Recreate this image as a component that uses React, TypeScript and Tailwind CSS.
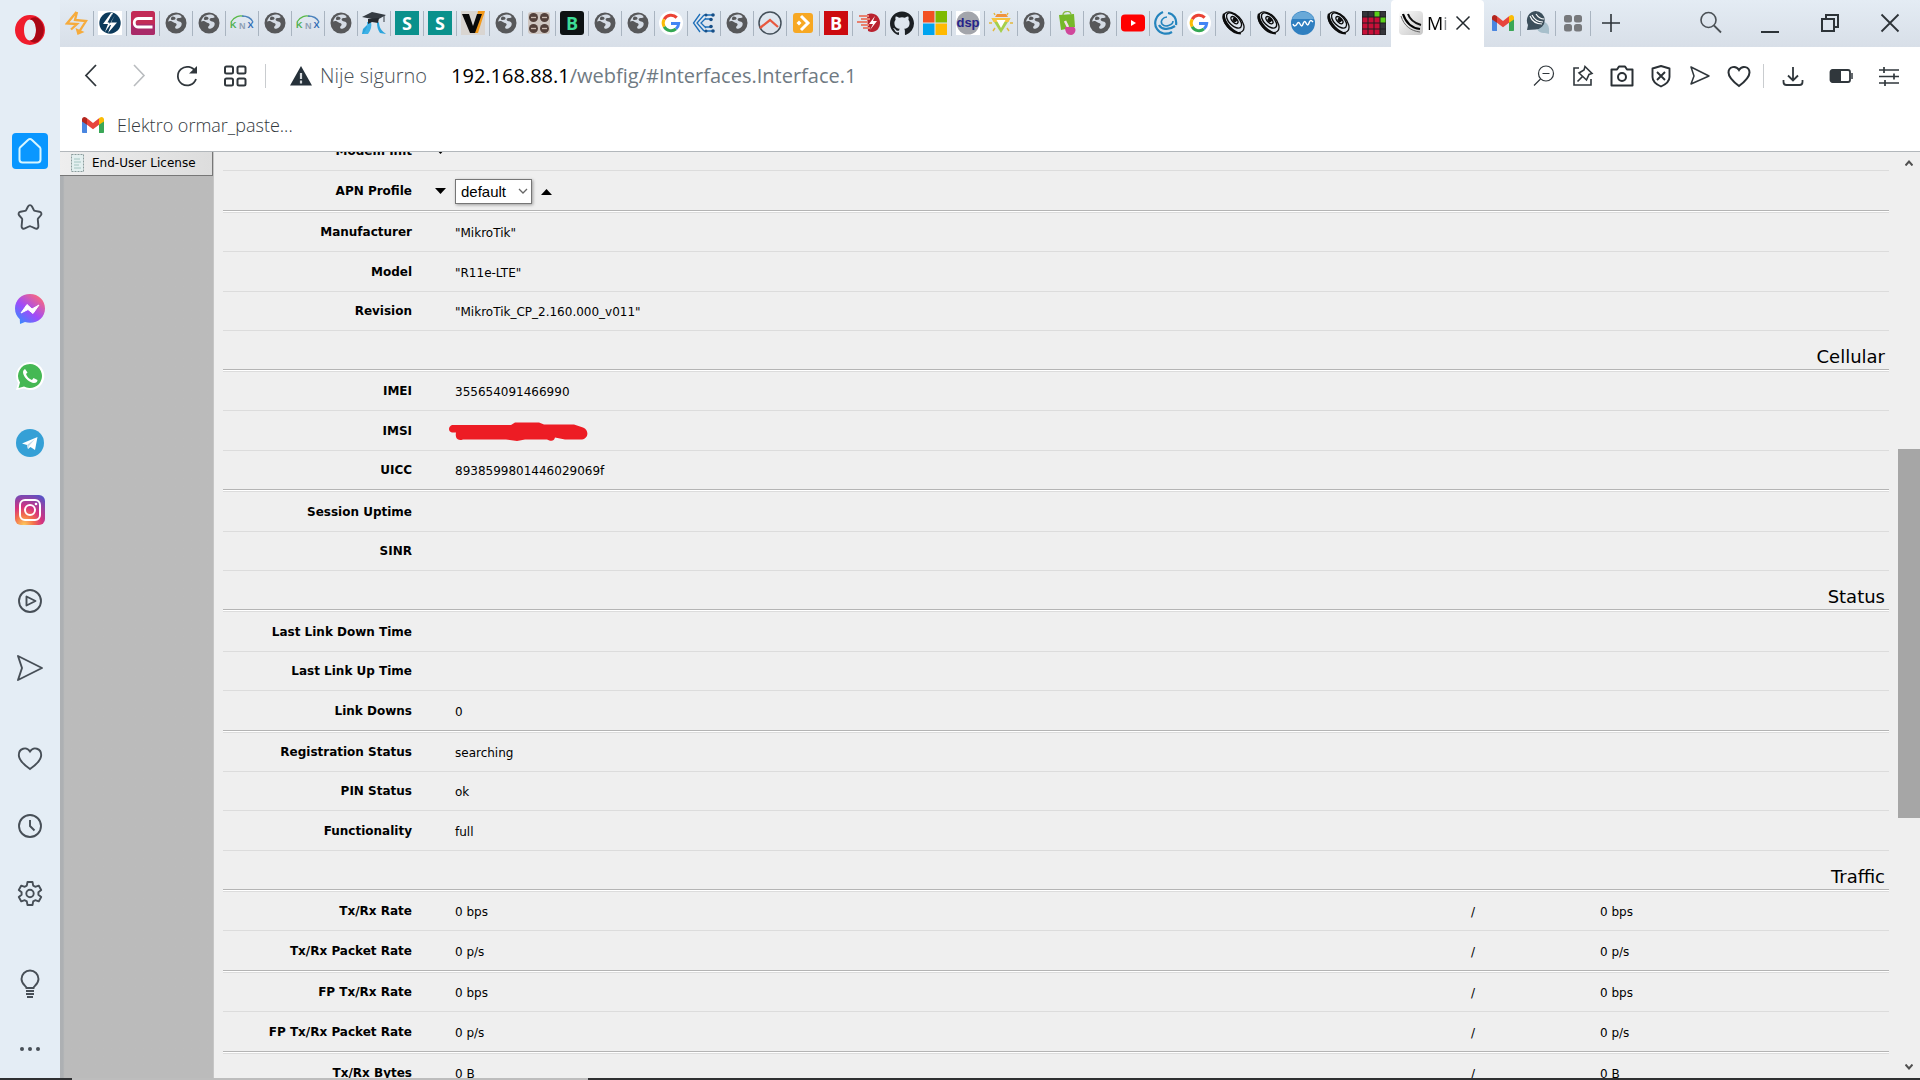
import type { ReactNode } from 'react'

type IconProps = { children: ReactNode; size?: string; box?: string }

function Icon({ children, size = 'size-6', box = '0 0 24 24' }: IconProps) {
  return (
    <svg className={`${size} shrink-0`} viewBox={box} fill="none" aria-hidden="true">
      {children}
    </svg>
  )
}

/* ---------- favicons ---------- */

const Globe = () => (
  <Icon>
    <circle cx="12" cy="12" r="10.500" fill="#57585a" />
    <path d="M4 10.500c1.800-1 3.800-.6 5 .6 1.300 1.300 3.300.7 3.600 2.200.2 1.500-1.600 1.900-1.500 3.200.1 1 1.200 1.500 2.300 1.200 2.600-.7 4.600-2.700 4.300-5.200-.2-1.900-2.300-2-4-2.600-1.500-.5-1.400-2-.2-2.600 1.300-.7 3 .2 4.200-1l-.8-1.600C14 2.500 9 3.500 6.500 6 5 7.500 4.500 9 4 10.500z" fill="#d5dce5" />
    <path d="M8.500 5.500c2 .1 3.500 1 3 2.300-.5 1.200-2.600 1.400-4.300.9C6.500 7.300 7.300 6 8.500 5.500z" fill="#57585a" />
  </Icon>
)

const Google = () => (
  <Icon>
    <circle cx="12" cy="12" r="12" fill="#fff" />
    <g strokeWidth="3">
      <path d="M17.700 6.600A7.800 7.800 0 005.200 8.200" stroke="#ea4335" />
      <path d="M5.200 8.200a7.800 7.800 0 000 7.600" stroke="#fbbc05" />
      <path d="M5.200 15.800a7.800 7.800 0 0011.800 2.100" stroke="#34a853" />
      <path d="M17 17.900a7.800 7.800 0 002.700-5.400H12" stroke="#4285f4" />
    </g>
  </Icon>
)

const Gmail = ({ size = 'size-6' }: { size?: string }) => (
  <Icon size={size}>
    <path d="M1 6v13c0 .8.500 1 1 1h4v-9z" fill="#4a86e0" />
    <path d="M23 6v13c0 .8-.5 1-1 1h-4v-9z" fill="#3aa757" />
    <path d="M1 6.500C1 4 3.500 3.200 5 4.500l1 .8v6.500L1 8.500z" fill="#b3261e" />
    <path d="M23 6.500C23 4 20.500 3.200 19 4.500l-1 .8v6.500l5-3.300z" fill="#fbbc04" />
    <path d="M6 5.300l6 4.600 6-4.600v6.400l-6 4.600-6-4.600z" fill="#e8453c" />
  </Icon>
)

const Knx = () => (
  <Icon>
    <path d="M1 11C4 5.500 10 4 14 5.500" stroke="#58b947" strokeWidth="1.300" />
    <path d="M12 5c5 0 9 2 11 6" stroke="#4c83bd" strokeWidth="1.300" />
    <g fontSize="9" fontWeight="700" fontFamily="Liberation Sans, sans-serif">
      <text x="0" y="17" fill="#4faf4e">K</text>
      <text x="9" y="18" fill="#8fa0b4">N</text>
      <text x="17.500" y="17" fill="#2f6cb5">X</text>
    </g>
  </Icon>
)

const Letter = ({ ch, bg, fg, r = 0 }: { ch: string; bg: string; fg: string; r?: number }) => (
  <Icon>
    <rect width="24" height="24" rx={r} fill={bg} />
    <text x="12" y="18.500" textAnchor="middle" fontSize="18" fontWeight="700" fontFamily="Open Sans, sans-serif" fill={fg}>
      {ch}
    </text>
  </Icon>
)

const Dish = () => (
  <Icon>
    <g transform="rotate(45 12 12)" stroke="#0b0b0b" fill="none">
      <ellipse cx="11" cy="9.500" rx="9.500" ry="5" strokeWidth="1.400" />
      <ellipse cx="12" cy="11" rx="12.500" ry="7.500" strokeWidth="1.300" />
      <path d="M-1 12c3 7 19 9 26 2-6 4-19 5-26-2z" fill="#0b0b0b" strokeWidth="1.800" />
      <ellipse cx="11" cy="9" rx="4.500" ry="2.200" strokeWidth="1.400" />
      <circle cx="11" cy="8.500" r="1.800" fill="#0b0b0b" />
    </g>
  </Icon>
)

const Bolt = () => (
  <Icon>
    <path d="M11.500 1L2 12.500l10 .5L6 18.500" stroke="#f6ab3c" strokeWidth="2.300" />
    <path d="M12 1L10 9l11 1-7 11" stroke="#f6ab3c" strokeWidth="2.300" />
    <path d="M10.500 17l2 7 7-3z" fill="#f6ab3c" />
  </Icon>
)

const BoltDisc = () => (
  <Icon>
    <rect width="24" height="24" fill="#fff" />
    <circle cx="12" cy="12" r="10.700" fill="#0c3a5b" />
    <path d="M13 2L5 13h5L7 21l5-7-1-4 4-8z" fill="#fff" />
    <path d="M17 4l-4 7.500h6L10 22l3-8h-2z" fill="#fff" />
    <path d="M14 3L9.500 11.500h3z" fill="#0c3a5b" />
  </Icon>
)

const MagentaC = () => (
  <Icon>
    <rect width="24" height="24" rx="2.500" fill="#c22b56" />
    <rect y="13" width="24" height="11" rx="2.500" fill="#a92a68" />
    <path d="M21.500 7.500H7c-5 0-5 8.500 0 8.500h14.500" stroke="#fff" strokeWidth="2.800" />
  </Icon>
)

const Graduate = () => (
  <Icon>
    <path d="M6 11L4 23H0l1-5 4-4zM17 11c0 6 3 9 7 12l-6-1c-2-3-3-6-3-10z" fill="#2ba4dc" />
    <path d="M5 11c1 5-1 8-4 12h5c3-4 4-8 3-12z" fill="#3db1e6" />
    <path d="M0 6l10-5 14 3-9 5z" fill="#353b42" />
    <path d="M6 8v5l4-2 6 1 1-5z" fill="#252a30" />
    <path d="M22 4v7" stroke="#353b42" strokeWidth="1" />
  </Icon>
)

const Vee = () => (
  <Icon>
    <rect width="24" height="24" fill="#d9d5d1" />
    <path d="M17 0h7l-7 22h-4z" fill="#f39a1b" />
    <path d="M1 3h7l4 12 4-12h5l-7 19H9z" fill="#0a0a0a" />
  </Icon>
)

const Knobs = () => (
  <Icon>
    <rect x="1" y="1" width="22" height="22" rx="3" fill="#cfc7c2" />
    {[6.5, 17.5].map((y) =>
      [6.5, 17.5].map((x) => (
        <g key={`${x}-${y}`}>
          <circle cx={x} cy={y} r="4.500" fill="#53403a" />
          <path d={`M${x - 2.5} ${y}h5`} stroke="#c9b8ae" strokeWidth="1.300" />
        </g>
      )),
    )}
  </Icon>
)

const Circuit = () => (
  <Icon>
    <path d="M8 3L1.500 12 8 21M12 4L5 12l7 8M14 7l-5 5 5 5" stroke="#1d6fb8" strokeWidth="1.300" />
    <path d="M12 4h9M13 8h6M12 20h9M13 16h6" stroke="#1d6fb8" strokeWidth="1.600" />
    <g fill="#174f87">
      <circle cx="21" cy="4" r="1.800" />
      <circle cx="19" cy="8.500" r="1.800" />
      <circle cx="19" cy="15.500" r="1.800" />
      <circle cx="21" cy="20" r="1.800" />
      <circle cx="14" cy="4" r="1.500" />
      <circle cx="14" cy="20" r="1.500" />
    </g>
  </Icon>
)

const Summit = () => (
  <Icon>
    <circle cx="12" cy="12" r="11" stroke="#44505a" strokeWidth="1.500" />
    <path d="M2 17l10-8 8 7" stroke="#e8583e" strokeWidth="2.300" />
  </Icon>
)

const OrangeArrow = () => (
  <Icon>
    <rect x="2" y="2" width="20" height="20" rx="3" fill="#f7a823" />
    <path d="M10 5l7 7-7 7" stroke="#fff" strokeWidth="3" />
    <path d="M5.500 12L8 9.500l2.500 2.500L8 14.500z" fill="#fff" />
  </Icon>
)

const HeadBolt = () => (
  <Icon>
    <path d="M10 3.500c7-3 13 2 13 8.500s-6 11-12 8z" fill="#b9222f" />
    <path d="M2 5h10M4 8h9M0 11h11M4 14h8M6 17h7" stroke="#e8816f" strokeWidth="1.800" />
    <path d="M18 5l-6 8h4l-3 6 7-9h-4z" fill="#fff" />
  </Icon>
)

const Github = () => (
  <Icon>
    <path fill="#1b1f23" d="M12 .5C5.400.5 0 5.900 0 12.500c0 5.300 3.400 9.800 8.200 11.400.6.100.8-.3.800-.6v-2c-3.300.7-4-1.600-4-1.600-.6-1.400-1.300-1.800-1.300-1.800-1.100-.7.100-.7.100-.7 1.200.1 1.800 1.200 1.800 1.200 1.100 1.800 2.800 1.300 3.500 1 .1-.8.400-1.300.8-1.600-2.700-.3-5.500-1.300-5.500-5.900 0-1.300.5-2.400 1.200-3.200-.1-.3-.5-1.500.1-3.200 0 0 1-.3 3.300 1.200a11.500 11.500 0 016 0c2.300-1.500 3.300-1.200 3.300-1.200.7 1.700.2 2.900.1 3.200.8.800 1.200 1.900 1.200 3.200 0 4.600-2.800 5.600-5.500 5.900.4.400.8 1.100.8 2.200v3.300c0 .3.200.7.800.6A12 12 0 0024 12.500C24 5.900 18.600.5 12 .5z" />
  </Icon>
)

const Microsoft = () => (
  <Icon>
    <rect x="0" y="0" width="11.500" height="11.500" fill="#f25022" />
    <rect x="12.500" y="0" width="11.500" height="11.500" fill="#7fba00" />
    <rect x="0" y="12.500" width="11.500" height="11.500" fill="#00a4ef" />
    <rect x="12.500" y="12.500" width="11.500" height="11.500" fill="#ffb900" />
  </Icon>
)

const Dsp = () => (
  <Icon>
    <rect width="24" height="24" fill="#fff" />
    <circle cx="12" cy="12" r="11.500" fill="#a3a5ab" />
    <text x="12" y="16" textAnchor="middle" fontSize="13" fontWeight="700" fontFamily="Liberation Sans, sans-serif" fill="#26238a">
      dsp
    </text>
  </Icon>
)

const Sun = () => (
  <Icon>
    <path d="M6 6l2-3h9l2 3z" fill="#f0933c" />
    <path d="M2.500 7h19L12 22z" fill="#a5cf4c" />
    <path d="M2.500 7h19l-2 4h-15z" fill="#f5c542" />
    <path d="M7.500 9h9L12 17z" fill="#fff" />
    <path d="M12 0v2M5 2l1 2M19 2l-1 2M0 12h3M24 12h-3M4 20l2-3M20 20l-2-3" stroke="#e3b83d" strokeWidth="1.400" />
  </Icon>
)

const Bag = () => (
  <Icon>
    <path d="M8 4c0-4 7-5 8-1" stroke="#8dbb4a" strokeWidth="1.300" />
    <path d="M4 4l15-1 1 13-14 3z" fill="#76b82a" />
    <path d="M10 10l3 6" stroke="#f5dfe9" strokeWidth="2.500" />
    <path d="M10 16h9c3 2 1 8-3 8s-6-3-6-8z" fill="#d0479b" />
  </Icon>
)

const Youtube = () => (
  <Icon>
    <rect x="0" y="3.500" width="24" height="17" rx="4" fill="#f00" />
    <path d="M10 9v6l5-3z" fill="#fff" />
  </Icon>
)

const Swirl = () => (
  <Icon>
    <g stroke="#2484bd" strokeWidth="2.200">
      <path d="M9 1C2 4-1 12 3 18c3 5 10 6 15 3M14 2c6 1 9 6 8 12" />
      <path d="M13 6c-4 0-7 4-5 7 3 4 11 1 11-3" strokeWidth="1.600" />
      <path d="M5 14c2 4 9 6 16 1" />
    </g>
  </Icon>
)

const Wave = () => (
  <Icon>
    <circle cx="12" cy="12" r="12" fill="#2f7fc0" />
    <path d="M1 8a12 12 0 0122 0z" fill="#69a9d8" />
    <path d="M2 13c1 3 3 2 4 0s2-2 3 0 2 3 3 0 2-3 3-1 2 3 3 0 2-3 4-1" stroke="#fff" strokeWidth="1.500" />
  </Icon>
)

const PixelGrid = () => (
  <Icon>
    <rect width="24" height="24" fill="#1c1c20" />
    {[0, 1, 2, 3].map((r) =>
      [0, 1, 2, 3].map((c) => {
        const green = (r === 0 && c === 2) || (r === 1 && c === 3)
        const dark = r === 0 || c === 3
        return <rect key={`${r}${c}`} x={c * 6 + 0.5} y={r * 6 + 0.5} width="5" height="5" fill={green ? '#5ad01a' : dark ? '#35353a' : '#c80f38'} />
      }),
    )}
  </Icon>
)

const Mikrotik = () => (
  <Icon>
    <defs>
      <linearGradient id="mt" x1="0" y1="0" x2="1" y2="1">
        <stop offset="0" stopColor="#fdfdfd" />
        <stop offset="1" stopColor="#c6c6c6" />
      </linearGradient>
    </defs>
    <rect width="24" height="24" rx="4" fill="url(#mt)" />
    <path d="M2 5c3 10 10 15 19 16" stroke="#666" strokeWidth="1" />
    <path d="M4 3c3 9 8 14 17 15" stroke="#000" strokeWidth="2.200" />
    <path d="M9 3c2 6 6 9 13 11" stroke="#111" strokeWidth="2" />
  </Icon>
)

const Chat = () => (
  <Icon>
    <path d="M15 10a8 8 0 018 9v4l-4-1c-5 0-8-2-8-6z" fill="#a7bfcb" />
    <path d="M9.500 0a9 9 0 110 18.500L1 19l1-5A9.500 9.500 0 019.500 0z" fill="#3c4f5b" />
    <path d="M4 5c2 5 6 8 12 8M6 4c2 4 5 7 11 7M10 3c2 3 4 5 8 5" stroke="#fff" strokeWidth="1.200" />
  </Icon>
)

const FourDots = () => (
  <Icon>
    <g fill="#77797c">
      <rect x="3" y="4" width="8" height="7.500" rx="2.500" />
      <rect x="13" y="4" width="8" height="7.500" rx="2.500" />
      <rect x="3" y="13" width="8" height="7.500" rx="2.500" />
      <rect x="13" y="13" width="8" height="7.500" rx="2.500" />
    </g>
  </Icon>
)

const tabs: { name: string; icon: ReactNode }[] = [
  { name: 'Energy', icon: <Bolt /> },
  { name: 'Power', icon: <BoltDisc /> },
  { name: 'Catalog', icon: <MagentaC /> },
  { name: 'Site', icon: <Globe /> },
  { name: 'Site', icon: <Globe /> },
  { name: 'KNX', icon: <Knx /> },
  { name: 'Site', icon: <Globe /> },
  { name: 'KNX', icon: <Knx /> },
  { name: 'Site', icon: <Globe /> },
  { name: 'Courses', icon: <Graduate /> },
  { name: 'S', icon: <Letter ch="S" bg="#0a918c" fg="#fff" /> },
  { name: 'S', icon: <Letter ch="S" bg="#0a918c" fg="#fff" /> },
  { name: 'V', icon: <Vee /> },
  { name: 'Site', icon: <Globe /> },
  { name: 'Knobs', icon: <Knobs /> },
  { name: 'B', icon: <Letter ch="B" bg="#0d1213" fg="#3ddc97" r={3} /> },
  { name: 'Site', icon: <Globe /> },
  { name: 'Site', icon: <Globe /> },
  { name: 'Google', icon: <Google /> },
  { name: 'Circuit', icon: <Circuit /> },
  { name: 'Site', icon: <Globe /> },
  { name: 'Summit', icon: <Summit /> },
  { name: 'Arrow', icon: <OrangeArrow /> },
  { name: 'B', icon: <Letter ch="B" bg="#cc0a0f" fg="#fff" /> },
  { name: 'Electro', icon: <HeadBolt /> },
  { name: 'GitHub', icon: <Github /> },
  { name: 'Microsoft', icon: <Microsoft /> },
  { name: 'dsp', icon: <Dsp /> },
  { name: 'Solar', icon: <Sun /> },
  { name: 'Site', icon: <Globe /> },
  { name: 'Shop', icon: <Bag /> },
  { name: 'Site', icon: <Globe /> },
  { name: 'YouTube', icon: <Youtube /> },
  { name: 'Swirl', icon: <Swirl /> },
  { name: 'Google', icon: <Google /> },
]

const wideTabs = [
  { name: 'Antenna', icon: <Dish /> },
  { name: 'Antenna', icon: <Dish /> },
  { name: 'Wave', icon: <Wave /> },
  { name: 'Antenna', icon: <Dish /> },
  { name: 'Pixels', icon: <PixelGrid /> },
]

const pinnedTabs = [
  { name: 'Gmail', icon: <Gmail /> },
  { name: 'Forum', icon: <Chat /> },
  { name: 'Speed dial', icon: <FourDots /> },
]

function TabBar() {
  return (
    <header className="flex h-[47px] shrink-0 bg-linear-to-b from-[#e4ecf4] to-[#d8dfe8] pl-px">
      <div className="flex h-[46px] items-center">
        {tabs.map((t, i) => (
          <button key={i} aria-label={t.name} className="flex h-[25px] w-[33px] shrink-0 items-center justify-center border-r border-[#a9b4c0]">
            {t.icon}
          </button>
        ))}
        {wideTabs.map((t, i) => (
          <button key={i} aria-label={t.name} className={`flex h-[25px] w-[35px] shrink-0 items-center justify-center border-[#a9b4c0] ${i < 4 ? 'border-r' : ''}`}>
            {t.icon}
          </button>
        ))}
      </div>
      <div className="flex w-[93px] shrink-0 items-center rounded-t bg-white pb-px pl-2">
        <Mikrotik />
        <span className="ml-1 w-5 overflow-hidden bg-linear-to-r from-black from-70% to-gray-300 bg-clip-text text-lg leading-6 text-transparent">Mi</span>
        <button aria-label="Close tab" className="ml-2">
          <Icon size="size-4" box="0 0 16 16">
            <path d="M1.500 1.500l13 13M14.500 1.500l-13 13" stroke="#22282d" strokeWidth="1.500" />
          </Icon>
        </button>
      </div>
      <div className="flex h-[46px] flex-1 items-center pl-[2px]">
        {pinnedTabs.map((t) => (
          <button key={t.name} aria-label={t.name} className="flex h-[25px] w-[35px] shrink-0 items-center justify-center border-r border-[#a9b4c0]">
            {t.icon}
          </button>
        ))}
        <button aria-label="New tab" className="ml-2">
          <Icon>
            <path d="M12 3v18M3 12h18" stroke="#2d3338" strokeWidth="1.600" />
          </Icon>
        </button>
        <div className="ml-auto flex">
          <button aria-label="Search tabs" className="flex w-15 justify-center">
            <Icon>
              <circle cx="10.500" cy="9" r="7.500" stroke="#4a5055" strokeWidth="1.600" />
              <path d="M16 14.500l7 7" stroke="#4a5055" strokeWidth="1.800" />
            </Icon>
          </button>
          <button aria-label="Minimize" className="flex w-15 justify-center">
            <Icon>
              <path d="M3 21h18" stroke="#2d3338" strokeWidth="2" />
            </Icon>
          </button>
          <button aria-label="Restore" className="flex w-15 justify-center">
            <Icon>
              <path d="M4 8h12v12H4zM8 8V4h12v12h-4" stroke="#2d3338" strokeWidth="2" />
            </Icon>
          </button>
          <button aria-label="Close" className="flex w-15 justify-center">
            <Icon>
              <path d="M3.500 3.500l17 17M20.500 3.500l-17 17" stroke="#2d3338" strokeWidth="1.800" />
            </Icon>
          </button>
        </div>
      </div>
    </header>
  )
}

/* ---------- toolbar ---------- */

const navButtons = [
  { name: 'Back', icon: <path d="M17 1L7 11.500 17 22" stroke="#30373c" strokeWidth="1.800" /> },
  { name: 'Forward', icon: <path d="M7 1l10 10.500L7 22" stroke="#b9bcbf" strokeWidth="1.600" /> },
  {
    name: 'Reload',
    icon: (
      <>
        <path d="M20.500 8A9.300 9.300 0 1021 15" stroke="#30373c" strokeWidth="1.800" />
        <path d="M22 2v7.500h-8z" fill="#30373c" />
      </>
    ),
  },
  {
    name: 'Speed dial',
    icon: (
      <g stroke="#30373c" strokeWidth="2">
        <rect x="2" y="2.500" width="8" height="7" rx="1.500" />
        <rect x="14.500" y="2.500" width="8" height="7" rx="1.500" />
        <rect x="2" y="14.500" width="8" height="7" rx="1.500" />
        <rect x="14.500" y="14.500" width="8" height="7" rx="1.500" />
      </g>
    ),
  },
]

const pageButtons = [
  {
    name: 'Zoom out',
    icon: (
      <g stroke="#30373c" strokeWidth="1.200">
        <circle cx="14" cy="9.500" r="7.500" />
        <path d="M8.500 15L2 21.500M10.500 9.500h7" />
      </g>
    ),
  },
  {
    name: 'Pin',
    icon: (
      <g stroke="#30373c" strokeWidth="1.600">
        <path d="M8 4H3v17h17v-6M6.500 17.500l5-5" />
        <path d="M14 2.500l7 7-3 1-2.500 5.500L8 9l5-3z" />
      </g>
    ),
  },
  {
    name: 'Snapshot',
    icon: (
      <g stroke="#2a3035" strokeWidth="2">
        <path d="M1.500 5.500H7L9 2.500h6l2 3h5.500v16h-21z" strokeLinejoin="round" />
        <circle cx="12" cy="13" r="4" />
      </g>
    ),
  },
  {
    name: 'Ad blocker',
    icon: (
      <g stroke="#2a3035" strokeWidth="1.900">
        <path d="M12 2l8.500 2.500v8.500c0 4.500-4 7.500-8.500 9.500-4.500-2-8.500-5-8.500-9.500V4.500z" strokeLinejoin="round" />
        <path d="M8 8l8 8M16 8l-8 8" />
      </g>
    ),
  },
  { name: 'Send', icon: <path d="M3 3l18 9L3 20l3-8z" stroke="#30373c" strokeWidth="1.500" strokeLinejoin="round" /> },
  {
    name: 'Add to bookmarks',
    icon: <path d="M12 22C6 17.500 1.500 13.500 1.500 8.500c0-6 7.500-7.500 10.500-2.500 3-5 10.500-3.500 10.500 2.500 0 5-4.500 9-10.500 13.500z" stroke="#2a3035" strokeWidth="2" />,
  },
]

const menuButtons = [
  {
    name: 'Downloads',
    icon: (
      <g stroke="#30373c" strokeWidth="1.800">
        <path d="M12 3v13M7 11.500l5 5 5-5M2.500 16v2c0 2 1 3 3 3h13c2 0 3-1 3-3v-2" />
      </g>
    ),
  },
  {
    name: 'Battery saver',
    icon: (
      <>
        <rect x="1.500" y="6" width="19.500" height="12" rx="2" stroke="#30373c" strokeWidth="1.800" />
        <rect x="2" y="6" width="10" height="12" fill="#30373c" />
        <path d="M23 9v6" stroke="#30373c" strokeWidth="1.500" />
      </>
    ),
  },
  {
    name: 'Easy setup',
    icon: <path d="M2 6h20M2 12.500h20M2 19h20M7 3v6M17 9.500v6M8 16v6" stroke="#30373c" strokeWidth="1.700" />,
  },
]

function Toolbar() {
  return (
    <div className="flex h-[57px] shrink-0 items-center pr-[7px] pl-[7px]">
      {navButtons.map((b) => (
        <button key={b.name} aria-label={b.name} className="flex w-12 justify-center">
          <Icon>{b.icon}</Icon>
        </button>
      ))}
      <div className="mx-[6px] h-6 w-px bg-[#c9cccf]" />
      <button className="ml-[18px] flex items-center gap-2 text-xl font-light text-[#4a5258]">
        <Icon size="size-[22px]" box="0 0 22 22">
          <path d="M11 1l11 19.500H0z" fill="#26313a" />
          <path d="M11 8v6M11 15.500v3" stroke="#d5d9dc" strokeWidth="2.200" />
        </Icon>
        Nije sigurno
      </button>
      <button aria-label="Page address" className="ml-6 flex-1 text-left text-xl text-[#6f7a83]">
        <span className="text-black">192.168.88.1</span>/webfig/#Interfaces.Interface.1
      </button>
      {pageButtons.map((b) => (
        <button key={b.name} aria-label={b.name} className="flex w-[39px] justify-center">
          <Icon>{b.icon}</Icon>
        </button>
      ))}
      <div className="mx-[5px] h-6 w-px bg-[#c9cccf]" />
      {menuButtons.map((b) => (
        <button key={b.name} aria-label={b.name} className="flex w-12 justify-center">
          <Icon>{b.icon}</Icon>
        </button>
      ))}
    </div>
  )
}

/* ---------- left rail ---------- */

const railGroups: { name: string; icon: ReactNode; active?: boolean }[][] = [
  [
    {
      name: 'Home',
      active: true,
      icon: <path d="M6 12.500L14.500 4.500c.8-.8 2.200-.8 3 0l8.500 8c.4.500.5 1 .5 1.500v10.500c0 2-1 3-3 3h-15c-2 0-3-1-3-3V14c0-.6.100-1 .5-1.500z" stroke="#d8f6ff" strokeWidth="2" />,
    },
    {
      name: 'Bookmarks',
      icon: <path d="M14 4.500c1-1.800 3-1.800 4 0l1.800 3.500c.3.500.7.800 1.200.9l4.500.8c2 .4 2.500 2.300 1.200 3.800l-2.500 2.800c-.3.400-.5.900-.4 1.400l.6 6.500c.1 2-1.600 3-3.300 2.200L17 24.500c-.6-.3-1.500-.3-2.100 0l-4 1.900c-1.700.8-3.400-.2-3.300-2.200l.6-6.500c.1-.5-.1-1-.4-1.400l-2.500-2.800c-1.300-1.500-.8-3.400 1.200-3.800l4.500-.8c.5-.1.900-.4 1.200-.9z" stroke="#474f57" strokeWidth="1.900" />,
    },
  ],
  [
    {
      name: 'Messenger',
      icon: (
        <>
          <defs>
            <linearGradient id="ms" x1="0" y1="1" x2="0.800" y2="0">
              <stop offset="0" stopColor="#1f98ff" />
              <stop offset="0.500" stopColor="#a04bfa" />
              <stop offset="1" stopColor="#ff6a75" />
            </linearGradient>
          </defs>
          <path d="M16 1C7.500 1 1 7 1 15.500c0 4.500 1.800 8 4.800 10.800L6 31l5-2c1.500.5 3.200.8 5 .8 8.500 0 15-6 15-14.300S24.500 1 16 1z" fill="url(#ms)" />
          <path d="M7 20l6-8.500 5 4.500 7-4-6 8.500-5-4z" fill="#fff" stroke="#fff" />
        </>
      ),
    },
    {
      name: 'WhatsApp',
      icon: (
        <>
          <path d="M16 2a14 14 0 11-6 26.500L2 30l2-7A14 14 0 0116 2z" fill="#fff" />
          <path d="M16 4a12 12 0 11-6 22.400L4.500 28 6 22.500A12 12 0 0116 4z" fill="#45b854" />
          <path d="M11 9c-2 1-2.500 3-1.500 5.500 2 4.500 6 8 10.500 8.500 2 0 3.500-1 3.500-3l-4-2-1.500 2c-3-1-5-3-6-6l1.500-1.500z" fill="#fff" />
        </>
      ),
    },
    {
      name: 'Telegram',
      icon: (
        <>
          <circle cx="16" cy="16" r="14" fill="#35a0d6" />
          <path d="M8 16.500L23.500 10 21 23l-4.500-3-2.500 2-1-4z" fill="#fff" />
          <path d="M13 18l8-6-6 7-1 3z" fill="#c0d9e8" />
        </>
      ),
    },
    {
      name: 'Instagram',
      icon: (
        <>
          <defs>
            <radialGradient id="ig" cx="0.300" cy="1" r="1.100">
              <stop offset="0" stopColor="#fdcb5c" />
              <stop offset="0.300" stopColor="#f3704b" />
              <stop offset="0.550" stopColor="#d5327f" />
              <stop offset="1" stopColor="#5b51c4" />
            </radialGradient>
          </defs>
          <rect x="1" y="1" width="30" height="30" rx="6" fill="url(#ig)" />
          <g stroke="#fff" strokeWidth="2">
            <rect x="6" y="6" width="20" height="20" rx="5" />
            <circle cx="16" cy="16" r="5" />
          </g>
          <circle cx="22" cy="10" r="1.300" fill="#fff" />
        </>
      ),
    },
  ],
  [
    {
      name: 'Player',
      icon: (
        <g stroke="#474f57" strokeWidth="1.900" strokeLinejoin="round">
          <circle cx="16" cy="16" r="11" />
          <path d="M12.500 11.500v9L21.500 16z" />
        </g>
      ),
    },
    { name: 'My Flow', icon: <path d="M4 4l24 12L4 28l4-12z" stroke="#474f57" strokeWidth="1.900" strokeLinejoin="round" /> },
  ],
  [
    {
      name: 'Favorites',
      icon: <path d="M16 26C9.500 21.500 4.800 17.300 4.800 12c0-6.500 7.700-9 11.200-3.500 3.500-5.500 11.200-3 11.200 3.500 0 5.300-4.700 9.500-11.200 14z" stroke="#474f57" strokeWidth="1.900" />,
    },
    {
      name: 'History',
      icon: (
        <g stroke="#474f57" strokeWidth="1.900">
          <circle cx="16" cy="16" r="11" />
          <path d="M16 10v6l4.500 4.500" />
        </g>
      ),
    },
    {
      name: 'Settings',
      icon: (
        <g stroke="#474f57" strokeWidth="1.900" strokeLinejoin="round">
          <path d="M13.500 5h5l.7 3.600 2 1.200 3.500-1.200 2.500 4.300-2.800 2.300v2.600l2.800 2.300-2.500 4.300-3.500-1.200-2 1.200-.7 3.600h-5l-.7-3.600-2-1.200-3.500 1.200-2.500-4.300 2.800-2.300v-2.600l-2.800-2.300 2.500-4.300 3.500 1.200 2-1.200z" />
          <circle cx="16" cy="16.500" r="3.700" />
        </g>
      ),
    },
  ],
  [
    {
      name: 'Tips',
      icon: (
        <g stroke="#474f57" strokeWidth="1.900">
          <path d="M12.500 20c0-1.500-5-4-5-9a8.500 8.500 0 0117 0c0 5-5 7.500-5 9z" />
          <path d="M12 23h8M12 26h8M13 29h6" />
        </g>
      ),
    },
    {
      name: 'More',
      icon: (
        <g fill="#474f57">
          <circle cx="8" cy="14" r="2" />
          <circle cx="16" cy="14" r="2" />
          <circle cx="24" cy="14" r="2" />
        </g>
      ),
    },
  ],
]

function Rail() {
  return (
    <nav aria-label="Sidebar" className="flex w-15 shrink-0 flex-col items-center bg-[#e4edf5] pt-[14px]">
      <button aria-label="Opera menu" className="mb-[87px]">
        <Icon size="size-8" box="0 0 32 32">
          <path fillRule="evenodd" d="M16 1a15 15 0 100 30 15 15 0 000-30zm0 4.500c3.500 0 6 4.500 6 10.500s-2.500 10.500-6 10.500S10 22 10 16s2.500-10.500 6-10.500z" fill="#f01d2d" />
          <path d="M16 5.500c2-2.500 6-3 9-.5a15 15 0 010 22c-3 2.500-7 2-9-.5 3.500 0 6-4.500 6-10.500S19.500 5.500 16 5.500z" fill="#a80715" />
        </Icon>
      </button>
      <div className="flex flex-col gap-[55px]">
        {railGroups.map((group, i) => (
          <div key={i} className="flex flex-col gap-[31px]">
            {group.map((item) => (
              <button key={item.name} aria-label={item.name} className={`flex size-9 items-center justify-center rounded ${item.active ? 'bg-[#0a97ff]' : ''}`}>
                <Icon size="size-8" box="0 0 32 32">
                  {item.icon}
                </Icon>
              </button>
            ))}
          </div>
        ))}
      </div>
    </nav>
  )
}

/* ---------- interface form ---------- */

type Row =
  | { kind: 'field'; label: string; value?: ReactNode; pair?: string; arrow?: boolean; tall?: boolean }
  | { kind: 'heading'; title: string }
  | { kind: 'divider' }

const Triangle = ({ up = false }: { up?: boolean }) => (
  <Icon size="h-[6px] w-[11px]" box="0 0 11 6">
    <path d={up ? 'M0 6L5.500 0 11 6z' : 'M0 0h11L5.500 6z'} fill="#000" />
  </Icon>
)

const apnSelect = (
  <div className="flex items-center gap-[9px]">
    <div className="relative flex shadow-[1px_1px_3px_rgba(0,0,0,0.35)]">
      <select id="apn-profile" className="h-[25px] w-[77px] appearance-none border border-[#767676] bg-white pl-[5px] font-['Liberation_Sans',Arial,sans-serif] text-[15px] leading-none">
        <option>default</option>
      </select>
      <svg className="pointer-events-none absolute top-[9px] right-1 h-[6px] w-[10px]" viewBox="0 0 10 6" fill="none" aria-hidden="true">
        <path d="M1 1l4 4 4-4" stroke="#666" strokeWidth="1.300" />
      </svg>
    </div>
    <button aria-label="Remove APN profile">
      <Triangle up />
    </button>
  </div>
)

const scribble = (
  <svg className="-ml-[7px] h-5 w-[140px]" viewBox="0 0 140 20" aria-label="hidden">
    <path d="M4 3h59l4-2.500h24l5 2h30l9 3c6 2 6 11-1 12h-17l-10-2c-1 4-4 4-8 2l-22 0-8 1.500-11-1.500H15c-6 2-8-2-7-7H4c-4-1-4-6 0-7.500z" fill="#ed1c24" />
  </svg>
)

const rows: Row[] = [
  { kind: 'field', label: 'Modem Init', arrow: true, tall: true },
  { kind: 'field', label: 'APN Profile', arrow: true, value: apnSelect, tall: true },
  { kind: 'divider' },
  { kind: 'field', label: 'Manufacturer', value: '"MikroTik"' },
  { kind: 'field', label: 'Model', value: '"R11e-LTE"', tall: true },
  { kind: 'field', label: 'Revision', value: '"MikroTik_CP_2.160.000_v011"' },
  { kind: 'heading', title: 'Cellular' },
  { kind: 'divider' },
  { kind: 'field', label: 'IMEI', value: '355654091466990' },
  { kind: 'field', label: 'IMSI', value: scribble, tall: true },
  { kind: 'field', label: 'UICC', value: '8938599801446029069f' },
  { kind: 'divider' },
  { kind: 'field', label: 'Session Uptime', tall: true },
  { kind: 'field', label: 'SINR' },
  { kind: 'heading', title: 'Status' },
  { kind: 'divider' },
  { kind: 'field', label: 'Last Link Down Time', tall: true },
  { kind: 'field', label: 'Last Link Up Time' },
  { kind: 'field', label: 'Link Downs', value: '0', tall: true },
  { kind: 'divider' },
  { kind: 'field', label: 'Registration Status', value: 'searching' },
  { kind: 'field', label: 'PIN Status', value: 'ok' },
  { kind: 'field', label: 'Functionality', value: 'full', tall: true },
  { kind: 'heading', title: 'Traffic' },
  { kind: 'divider' },
  { kind: 'field', label: 'Tx/Rx Rate', value: '0 bps', pair: '0 bps' },
  { kind: 'field', label: 'Tx/Rx Packet Rate', value: '0 p/s', pair: '0 p/s', tall: true },
  { kind: 'divider' },
  { kind: 'field', label: 'FP Tx/Rx Rate', value: '0 bps', pair: '0 bps' },
  { kind: 'field', label: 'FP Tx/Rx Packet Rate', value: '0 p/s', pair: '0 p/s', tall: true },
  { kind: 'divider' },
  { kind: 'field', label: 'Tx/Rx Bytes', value: '0 B', pair: '0 B' },
]

function FormRow({ row, ruled }: { row: Row; ruled: boolean }) {
  if (row.kind === 'divider') {
    return (
      <tr>
        <td colSpan={5} className="h-[3px] border-t border-b border-t-[#b4b4b4] border-b-[#dcdcdc] bg-white p-0" />
      </tr>
    )
  }
  if (row.kind === 'heading') {
    return (
      <tr>
        <td colSpan={5} className="h-[38px] pr-1 text-right align-bottom text-lg leading-6">
          <h2>{row.title}</h2>
        </td>
      </tr>
    )
  }
  const line = ruled ? 'border-b border-[#dcdcdc]' : ''
  const height = ruled ? (row.tall ? 'h-10' : 'h-[39px]') : row.tall ? 'h-[39px]' : 'h-[38px]'
  return (
    <tr>
      <th scope="row" className={`${line} ${height} p-0 text-right font-bold`}>
        {row.label === 'APN Profile' ? <label htmlFor="apn-profile">{row.label}</label> : row.label}
      </th>
      <td className={`${line} p-0`}>
        {row.arrow && (
          <button aria-label={`Toggle ${row.label}`} className="ml-[23px] flex">
            <Triangle />
          </button>
        )}
      </td>
      <td className={`${line} px-0 pt-[2px] pb-0`}>{row.value}</td>
      <td className={`${line} px-0 pt-[2px] pb-0`}>{row.pair && '/'}</td>
      <td className={`${line} px-0 pt-[2px] pb-0`}>{row.pair}</td>
    </tr>
  )
}

function InterfaceForm() {
  return (
    <table className="-mt-[21px] w-full table-fixed border-separate border-spacing-0 text-xs">
      <colgroup>
        <col className="w-[189px]" />
        <col className="w-[43px]" />
        <col />
        <col className="w-[129px]" />
        <col className="w-[289px]" />
      </colgroup>
      <tbody>
        {rows.map((row, i) => (
          <FormRow key={i} row={row} ruled={rows[i + 1]?.kind !== 'divider'} />
        ))}
      </tbody>
    </table>
  )
}

function WebFig() {
  return (
    <div className="flex min-h-0 flex-1 border-t border-[#b2b7bb] bg-[#efefef] font-['DejaVu_Sans',Verdana,sans-serif] text-black">
      <aside className="w-[154px] shrink-0 border-r border-[#c6c6c6] bg-linear-to-r from-[#adb0b3] from-2% to-[#bbb] to-3%">
        <a href="#license" className="flex h-6 items-center gap-2 border-r border-b border-[#777] bg-linear-to-r from-[#eee] to-[#ddd] pb-px pl-[11px] text-xs whitespace-nowrap">
          <Icon size="h-[18px] w-[13px]" box="0 0 13 18">
            <rect x="0.500" y="0.500" width="12" height="17" fill="#e3efef" stroke="#8b9c9c" strokeDasharray="2 1" />
            <path d="M3 5h6M3 8h7M3 11h5M3 14h7" stroke="#a3c4c0" />
          </Icon>
          End-User License
        </a>
      </aside>
      <main className="min-w-0 flex-1 overflow-hidden px-[9px]">
        <InterfaceForm />
      </main>
      <div className="flex w-[22px] shrink-0 flex-col items-center">
        <button aria-label="Scroll up" className="flex h-[22px] items-center">
          <Icon size="h-[6px] w-[8px]" box="0 0 8 6">
            <path d="M0.500 5.500L4 1.500l3.500 4" stroke="#505050" strokeWidth="2" />
          </Icon>
        </button>
        <div className="flex w-full flex-1 flex-col">
          <div className="grow-[275]" />
          <div className="grow-[369] bg-[#a6a6a6]" />
          <div className="grow-[238]" />
        </div>
        <button aria-label="Scroll down" className="flex h-[22px] items-center">
          <Icon size="h-[6px] w-[8px]" box="0 0 8 6">
            <path d="M0.500 0.500L4 4.500l3.500-4" stroke="#505050" strokeWidth="2" />
          </Icon>
        </button>
      </div>
    </div>
  )
}

export default function App() {
  return (
    <div className="flex h-screen flex-col overflow-hidden bg-white font-['Open_Sans','Noto_Sans',sans-serif]">
      <div className="flex min-h-0 flex-1">
        <Rail />
        <div className="flex min-w-0 flex-1 flex-col">
          <TabBar />
          <Toolbar />
          <div className="flex h-[47px] shrink-0 items-center pb-[6px] pl-[21px]">
            <a href="#mail" className="flex items-center gap-3 text-lg font-light text-[#32383d]">
              <Gmail />
              Elektro ormar_paste...
            </a>
          </div>
          <WebFig />
        </div>
      </div>
      <footer className="flex h-[2px] shrink-0 bg-[#2f3032]">
        <div className="w-18" />
        <div className="w-[516px] bg-[#bdbdbd]" />
      </footer>
    </div>
  )
}
